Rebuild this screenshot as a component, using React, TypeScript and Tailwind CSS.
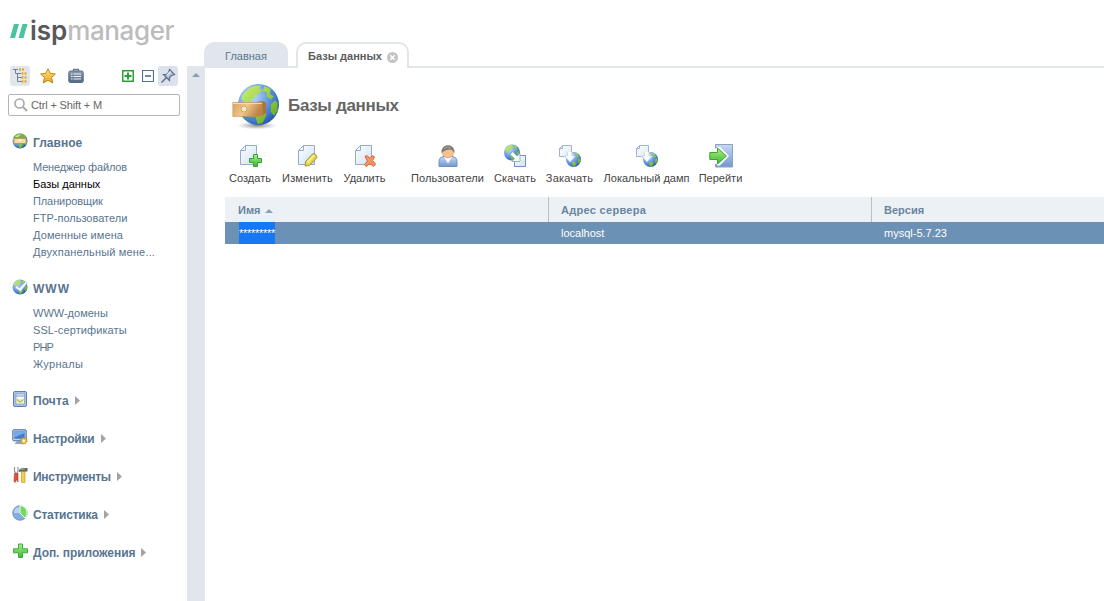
import React from "react";

const Defs = () => (
  <svg className="absolute size-0" aria-hidden="true">
    <defs>
      <radialGradient id="globe" cx="32%" cy="30%" r="78%">
        <stop offset="0" stopColor="#c4dff9" />
        <stop offset="0.5" stopColor="#6c9fe2" />
        <stop offset="0.8" stopColor="#3f74c8" />
        <stop offset="1" stopColor="#27509f" />
      </radialGradient>
      <linearGradient id="land" x1="0" y1="0" x2="1" y2="1">
        <stop offset="0" stopColor="#d2ee7c" />
        <stop offset="0.5" stopColor="#9ad03e" />
        <stop offset="1" stopColor="#55a01f" />
      </linearGradient>
      <linearGradient id="green" x1="0" y1="0" x2="0" y2="1">
        <stop offset="0" stopColor="#a9f087" />
        <stop offset="1" stopColor="#3cb82e" />
      </linearGradient>
      <linearGradient id="page" x1="0" y1="0" x2="1" y2="1">
        <stop offset="0" stopColor="#ffffff" />
        <stop offset="1" stopColor="#cfe0f4" />
      </linearGradient>
      <linearGradient id="drawer" x1="0" y1="0" x2="1" y2="0.3">
        <stop offset="0" stopColor="#d8a25e" />
        <stop offset="0.5" stopColor="#efc68c" />
        <stop offset="1" stopColor="#bd8543" />
      </linearGradient>
      <linearGradient id="blue" x1="0" y1="0" x2="0" y2="1">
        <stop offset="0" stopColor="#c5daf3" />
        <stop offset="1" stopColor="#7397cf" />
      </linearGradient>
      <linearGradient id="gold" x1="0" y1="0" x2="0" y2="1">
        <stop offset="0" stopColor="#ffe98a" />
        <stop offset="1" stopColor="#e9a313" />
      </linearGradient>
      <linearGradient id="steel" x1="0" y1="0" x2="0" y2="1">
        <stop offset="0" stopColor="#8e9fb5" />
        <stop offset="1" stopColor="#53677f" />
      </linearGradient>
      <radialGradient id="shade">
        <stop offset="0" stopColor="#555" stopOpacity="0.7" />
        <stop offset="1" stopColor="#888" stopOpacity="0" />
      </radialGradient>
    </defs>
  </svg>
);

const GlobeShape = ({ x, y, r }: { x: number; y: number; r: number }) => (
  <g transform={`translate(${x} ${y}) scale(${r / 10})`}>
    <circle r="10" fill="url(#globe)" />
    <path
      d="M-8.500 -3C-7 -7 -3 -9.500 1 -9.300L.5 -7.500L2 -7L0 -5L-1.500 -5L-2 -3L-4 -2.500L-3.500 -1L-5 0L-7 -1.500ZM3 -9L6 -7.500L5.500 -5L7.500 -4L6 -2.500L4 -4L4 -6L2 -6.500ZM6 0L8 -2L9.300 -1V3L7.500 5.500L6 3.500ZM-2 3.500L1 3L4 4.500L3.500 6L2 9L-.5 9.500L-1 7.500Z"
      fill="url(#land)"
    />
  </g>
);

const PageShape = () => (
  <path d="M7.500 1.500H18.500V20.500H2.500V6.500ZM7.500 1.500V6.500H2.500" fill="url(#page)" stroke="#93acce" />
);

const Svg24 = ({ children }: { children: React.ReactNode }) => (
  <svg className="size-6 shrink-0" viewBox="0 0 24 24">{children}</svg>
);

const CreateIcon = () => (
  <Svg24>
    <PageShape />
    <path d="M15.500 10.500H19.500V14.500H23.500V18.500H19.500V22.500H15.500V18.500H11.500V14.500H15.500Z" fill="url(#green)" stroke="#32a435" />
  </Svg24>
);
const EditIcon = () => (
  <Svg24>
    <PageShape />
    <path d="M9.500 17.500L17 9.500Q20.500 10 21 13.500L13.500 21.500L9 22Z" fill="#e3d548" stroke="#9d9437" />
    <path d="M11.500 18.500L18.500 11" stroke="#fbf4a0" strokeWidth="1.500" />
  </Svg24>
);
const DeleteIcon = () => (
  <Svg24>
    <PageShape />
    <path d="M12 12.500L14 11.500L16.500 14L20 11.500L21.500 13L19.500 16.500L22.500 20L20.500 22.500L17 19.500L13 22.500L11.500 20.500L14.500 17Z" fill="#f59561" stroke="#dc6139" strokeLinejoin="round" />
  </Svg24>
);
const UserIcon = () => (
  <Svg24>
    <path d="M3 22.500V17.500Q3 13 8 12.500H16Q21 13 21 17.500V22.500Z" fill="url(#blue)" stroke="#6f8fc2" />
    <path d="M8 13L12 19.500L16 13Z" fill="#fff" />
    <circle cx="12" cy="8.500" r="5.500" fill="#f3c28d" stroke="#b98d61" strokeWidth=".5" />
    <path d="M5.500 9C4.500 -1.500 19.500 -1.500 18.500 9L16 6Q12 4.500 8.500 7Z" fill="#7f7b76" />
    <path d="M8 4.500Q11 1.500 15 4" fill="none" stroke="#aaa49c" />
  </Svg24>
);
const DownloadIcon = () => (
  <Svg24>
    <GlobeShape x={9} y={8.5} r={8} />
    <rect x="11.500" y="11.500" width="11" height="11" fill="url(#page)" stroke="#7394bf" />
    <path d="M9.500 7.500L14 12L17 9.500V17.500H9L11.500 14.500L7 10.500Z" fill="#f5faff" stroke="#86a5cc" strokeWidth=".8" />
  </Svg24>
);
const UploadIcon = () => (
  <Svg24>
    <GlobeShape x={15.5} y={15.5} r={7.5} />
    <path d="M4.500 1.500H13.500V9.500H17L12 17L6.500 12.500H1.500V4.500ZM4.500 1.500V4.500H1.500" fill="url(#page)" stroke="#9fb5d2" />
    <path d="M9.500 8V12L6.500 12L12 18L17.500 12H14V8" fill="#fafdff" stroke="#bccbdd" strokeWidth=".7" />
  </Svg24>
);
const GoIcon = () => (
  <Svg24>
    <path d="M6.500 .5H23.500V23H6.500V20L10 22L19.500 12L10 2L6.500 4Z" fill="url(#blue)" stroke="#8ba2c6" />
    <path d="M8 2.500H11L20 12L11 21.500H8" fill="#fff" />
    <path d="M.8 8.500H8.500V4L17.500 12L8.500 20V15.500H.8Z" fill="url(#green)" stroke="#459f38" />
  </Svg24>
);

const Svg16 = ({ children }: { children: React.ReactNode }) => (
  <svg className="size-4 shrink-0" viewBox="0 0 16 16">{children}</svg>
);

const MainIcon = () => (
  <Svg16>
    <GlobeShape x={8} y={8} r={7.5} />
    <path d="M1 5Q3 .5 8 .5T15 5Z" fill="#7fae45" />
    <path d="M3 4Q5 1 9 1.500L6 4Z" fill="#d2e6a2" />
    <rect x="2" y="5.500" width="12" height="5" rx=".5" fill="#f3dba8" stroke="#b58a45" strokeWidth=".7" />
    <rect x="6.500" y="6.500" width="3" height="1.500" fill="#fffbea" />
  </Svg16>
);
const WebIcon = () => (
  <Svg16>
    <GlobeShape x={8} y={8} r={7.5} />
    <path d="M4 6L7.500 9L13.500 2.500L15 4.500L8.500 12.500L3.500 9Z" fill="#f7fbff" stroke="#8fb2da" strokeWidth=".6" />
  </Svg16>
);
const MailIcon = () => (
  <Svg16>
    <rect x="1.500" y=".5" width="13" height="15" rx="1.500" fill="#a8c2e8" stroke="#627fae" />
    <rect x="4" y="3" width="8.500" height="10" fill="#f4f8fd" stroke="#7e99c2" strokeWidth=".7" />
    <path d="M3.500 5H12.500" stroke="#7d98bf" />
    <path d="M5 8H11.500V12H5Z" fill="#eef29b" />
    <path d="M5 8.500L8.200 11L11.500 8.500" fill="none" stroke="#93a94a" />
  </Svg16>
);
const SettingsIcon = () => (
  <Svg16>
    <rect x=".8" y=".8" width="13.400" height="11" rx="1" fill="#c3d3e9" stroke="#4a6898" />
    <rect x="2.300" y="2.300" width="10.400" height="7.500" fill="#3f7ccd" />
    <path d="M2.300 2.300H12.700V4L2.300 8.500Z" fill="#79aae8" />
    <path d="M5 12H9L11 15H2.500Z" fill="#8ba4c3" />
    <circle cx="11.800" cy="11.800" r="2.800" fill="#f6d35b" stroke="#c8962a" strokeWidth="1.800" strokeDasharray="1.400 .8" />
    <circle cx="11.800" cy="11.800" r="1.100" fill="#fff" />
  </Svg16>
);
const ToolsIcon = () => (
  <Svg16>
    <path d="M2.500 0V4L4 7M6 0V4L4.500 7" stroke="#8c98a5" strokeWidth="1.200" fill="none" />
    <path d="M2.500 6.500H6V15L4.500 12.500L3 15.500L2 14Z" fill="#dd5637" stroke="#aa3421" strokeWidth=".6" />
    <rect x="9.500" y="4" width="3.500" height="11.700" rx=".8" fill="#efd346" stroke="#b39118" strokeWidth=".6" />
    <path d="M7 3Q8.500 .5 13 1H15.500V4.500H9L7 5Z" fill="#59695f" />
    <path d="M8.500 2.200H13" stroke="#a5b2a8" />
  </Svg16>
);
const StatsIcon = () => (
  <Svg16>
    <circle cx="8" cy="8" r="7.300" fill="#82addf" stroke="#5884bd" strokeWidth=".7" />
    <path d="M2 8Q2 2 7.500 2V8Z" fill="#b8d2f0" />
    <path d="M8 8V.7A7.300 7.300 0 0 1 13 13.200Z" fill="#73d961" stroke="#f1fff0" strokeWidth="1" />
  </Svg16>
);
const PlusIcon = () => (
  <Svg16>
    <path d="M6.500 1H10.500V5.800H15.500V9.800H10.500V14.500H6.500V9.800H1.500V5.800H6.500Z" fill="url(#green)" stroke="#3daa45" />
  </Svg16>
);

const TreeIcon = () => (
  <Svg16>
    <path d="M1 1.500H6M3.500 2V5.500H9M5.500 6V13.500H10M5.500 9.500H10" fill="none" stroke="#6f8196" />
    <path d="M7 1.500H9M10 1.500H12M9.500 5.500H11.500M12.500 5.500H14.500M9.500 9.500H11.500M12.500 9.500H14.500M9.500 13.500H11.500M12.500 13.500H14.500" stroke="#dfaa38" strokeWidth="2.400" />
  </Svg16>
);
const StarIcon = () => (
  <Svg16>
    <path d="M8 .7L10.200 5.300L15.400 6L11.500 9.500L12.800 15L8 12.300L3.200 15L4.500 9.500L.6 6L5.800 5.300Z" fill="url(#gold)" stroke="#c5851a" strokeLinejoin="round" />
  </Svg16>
);
const CaseIcon = () => (
  <Svg16>
    <path d="M5.500 3V1.500H10.500V3" fill="none" stroke="#6c7d93" strokeWidth="1.300" />
    <rect x=".8" y="3" width="14.400" height="11.500" rx="1.500" fill="url(#steel)" stroke="#586b83" />
    <path d="M3 6H4.500M5.500 6H13M3 8.500H4.500M5.500 8.500H13M3 11H4.500M5.500 11H13" stroke="#eef2f6" strokeWidth="1.200" />
  </Svg16>
);
const PinIcon = () => (
  <Svg16>
    <path d="M9.500 1.500L14.500 6.500L11.500 7.500L9.500 9.500L9.500 12.500L3.500 6.500L6.500 6.500L8.500 4.500Z" fill="#b9c7d7" stroke="#58708b" strokeWidth="1.200" />
    <path d="M6.500 9.500L1.500 14.500" stroke="#58708b" strokeWidth="1.500" />
    <path d="M7 7L10.500 3.500" stroke="#eef3f8" strokeWidth="1.200" />
  </Svg16>
);

const Triangle = () => (
  <svg className="h-[9px] w-[5px] shrink-0" viewBox="0 0 5 9">
    <path d="M0 0L5 4.500L0 9Z" fill="#a3a3a3" />
  </svg>
);

const Logo = () => (
  <div className="flex h-[30px] items-center">
    <svg className="h-[14px] w-[18px] shrink-0" viewBox="0 0 18 14">
      <path d="M4 0H9L5 14H0Z" fill="#4ac49f" />
      <path d="M12.500 0H17.500L13.500 14H8.500Z" fill="#4ac49f" />
    </svg>
    <span className="ml-[2px] font-['Inter'] text-[26px] leading-[30px] font-semibold text-[#58585a]">isp</span>
    <span className="font-['Inter'] text-[26px] leading-[30px] font-medium tracking-[-0.4px] text-[#bcbcbc]">manager</span>
  </div>
);

type Item = { label: string; tracking: string; active?: boolean };
type Section = { title: string; tracking: string; icon: React.ReactNode; items?: Item[]; height: string };

const sections: Section[] = [
  {
    title: "Главное", tracking: "tracking-normal", icon: <MainIcon />, height: "h-[146px]",
    items: [
      { label: "Менеджер файлов", tracking: "tracking-[-0.15px]" },
      { label: "Базы данных", tracking: "tracking-normal", active: true },
      { label: "Планировщик", tracking: "tracking-[-0.1px]" },
      { label: "FTP-пользователи", tracking: "tracking-normal" },
      { label: "Доменные имена", tracking: "tracking-[0.1px]" },
      { label: "Двухпанельный мене...", tracking: "tracking-[0.18px]" },
    ],
  },
  {
    title: "WWW", tracking: "tracking-[1px]", icon: <WebIcon />, height: "h-[112px]",
    items: [
      { label: "WWW-домены", tracking: "tracking-normal" },
      { label: "SSL-сертификаты", tracking: "tracking-[0.1px]" },
      { label: "PHP", tracking: "tracking-[-0.9px]" },
      { label: "Журналы", tracking: "tracking-[0.3px]" },
    ],
  },
  { title: "Почта", tracking: "tracking-[0.1px]", icon: <MailIcon />, height: "h-[38px]" },
  { title: "Настройки", tracking: "tracking-[-0.2px]", icon: <SettingsIcon />, height: "h-[38px]" },
  { title: "Инструменты", tracking: "tracking-[-0.3px]", icon: <ToolsIcon />, height: "h-[38px]" },
  { title: "Статистика", tracking: "tracking-[-0.25px]", icon: <StatsIcon />, height: "h-[38px]" },
  { title: "Доп. приложения", tracking: "tracking-[-0.05px]", icon: <PlusIcon />, height: "h-[38px]" },
];

const Sidebar = () => (
  <aside className="flex w-[187px] shrink-0 flex-col">
    <div className="h-[66px] pt-[16px] pl-[10px]"><Logo /></div>
    <div className="flex h-5 items-center pl-[10px]">
      <span className="flex size-5 items-center justify-center rounded-[3px] bg-[#e1e6ec]"><TreeIcon /></span>
      <span className="ml-[10px] flex"><StarIcon /></span>
      <span className="ml-[12px] flex"><CaseIcon /></span>
      <svg className="ml-[38px] size-3 shrink-0" viewBox="0 0 12 12">
        <path d="M.75 .75H11.250V11.250H.75Z" fill="#fff" stroke="#2aa437" strokeWidth="1.500" />
        <path d="M6 2.500V9.500M2.500 6H9.500" stroke="#2aa437" strokeWidth="2" />
      </svg>
      <svg className="ml-2 size-3 shrink-0" viewBox="0 0 12 12">
        <path d="M.5 .5H11.500V11.500H.5Z" fill="#fff" stroke="#54718f" strokeWidth="1.200" />
        <path d="M3 6H9" stroke="#44617f" strokeWidth="1.500" />
      </svg>
      <span className="ml-1 flex size-5 items-center justify-center rounded-[3px] bg-[#dbe2eb]"><PinIcon /></span>
    </div>
    <div className="mt-2 ml-2 flex h-[22px] w-[172px] items-center rounded-[2px] border border-[#b5b5b5] pl-[5px]">
      <svg className="size-[14px] shrink-0" viewBox="0 0 14 14">
        <circle cx="5.500" cy="5.500" r="4.500" fill="none" stroke="#a8a8a8" strokeWidth="1.600" />
        <path d="M9 9L13 13" stroke="#a8a8a8" strokeWidth="2" />
      </svg>
      <span className="ml-[3px] text-[11px] tracking-[-0.15px] text-[#666]">Ctrl + Shift + M</span>
    </div>
    <nav className="mt-[17px] flex flex-col">
      {sections.map((s) => (
        <section key={s.title} className={s.height}>
          <div className="flex h-[18px] items-start pl-[13px]">
            <span className="-ml-px flex">{s.icon}</span>
            <h2 className={`mt-[2px] ml-[5px] text-[12px] leading-[16px] font-bold whitespace-nowrap text-[#587590] ${s.tracking}`}>{s.title}</h2>
            {!s.items && <span className="mt-[5px] ml-[6px] flex"><Triangle /></span>}
          </div>
          {s.items && (
            <ul className="mt-2 ml-[33px]">
              {s.items.map((i) => (
                <li key={i.label} className={`h-[17px] text-[11px] leading-[17px] whitespace-nowrap ${i.active ? "text-black" : "text-[#587590]"}`}>
                  <span className={i.tracking}>{i.label}</span>
                </li>
              ))}
            </ul>
          )}
        </section>
      ))}
    </nav>
  </aside>
);

const tools = [
  { label: "Создать", width: "w-[42px]", margin: "ml-6", tracking: "tracking-normal", icon: <CreateIcon /> },
  { label: "Изменить", width: "w-[51px]", margin: "ml-[11px]", tracking: "tracking-[0.15px]", icon: <EditIcon /> },
  { label: "Удалить", width: "w-[41px]", margin: "ml-[11px]", tracking: "tracking-normal", icon: <DeleteIcon /> },
  { label: "Пользователи", width: "w-[73px]", margin: "ml-[26px]", tracking: "tracking-[0.1px]", icon: <UserIcon /> },
  { label: "Скачать", width: "w-[42px]", margin: "ml-[10px]", tracking: "tracking-[0.1px]", icon: <DownloadIcon /> },
  { label: "Закачать", width: "w-[47px]", margin: "ml-[10px]", tracking: "tracking-[0.15px]", icon: <UploadIcon /> },
  { label: "Локальный дамп", width: "w-[85px]", margin: "ml-[11px]", tracking: "tracking-normal", icon: <UploadIcon /> },
  { label: "Перейти", width: "w-[43px]", margin: "ml-[10px]", tracking: "tracking-normal", icon: <GoIcon /> },
];

const DatabaseIcon = () => (
  <svg className="h-12 w-[50px] shrink-0" viewBox="0 0 50 48">
    <ellipse cx="25" cy="43.500" rx="20" ry="4" fill="url(#shade)" />
    <GlobeShape x={26.5} y={22.5} r={20.5} />
    <path d="M24 20.500L30 19L34 20.500V31L29 34.500Z" fill="#a97539" />
    <path d="M.8 20.500H30V34.500H.8Z" fill="url(#drawer)" stroke="#c4945a" strokeWidth=".6" />
    <path d="M1 21.500H30" stroke="#f8dbad" />
    <circle cx="12" cy="27" r="3" fill="#f9e8bf" stroke="#c9985a" strokeWidth=".8" />
  </svg>
);

const HEAD = "flex h-[25px] items-center bg-[#ecf1f5] pt-[2px] font-bold text-[#6985a0]";
const CELL = "flex h-[22px] items-center bg-[#6b91b5] text-white";

const Main = () => (
  <main className="flex min-w-0 flex-1 flex-col">
    <div className="flex h-[68px] items-end">
      <div className="z-10 mb-[2px] -ml-px flex h-6 w-[84px] items-center justify-center rounded-t-[10px] bg-[#e1e6ec] pt-[4px] text-[11px] text-[#587590]">Главная</div>
      <div className="-ml-[83px] h-[2px] w-[91px] bg-[#e1e6ec]" />
      <div className="flex h-[26px] w-[113px] items-center rounded-t-[10px] border-2 border-b-0 border-[#e1e6ec] pl-[10px] text-[11px] font-bold text-[#5c5c5c]">
        <span className="w-[73px] whitespace-nowrap">Базы данных</span>
        <svg className="mt-[2px] ml-[6px] size-[11px] shrink-0" viewBox="0 0 11 11">
          <circle cx="5.500" cy="5.500" r="5.500" fill="#c3c3c3" />
          <path d="M3.300 3.300L7.700 7.700M7.700 3.300L3.300 7.700" stroke="#fff" strokeWidth="1.400" />
        </svg>
      </div>
      <div className="h-[2px] flex-1 bg-[#e1e6ec]" />
    </div>
    <header className="mt-[14px] ml-[27px] flex h-12 items-center">
      <DatabaseIcon />
      <h1 className="ml-[6px] text-[17px] font-bold whitespace-nowrap tracking-[-0.33px] text-[#666]">Базы данных</h1>
    </header>
    <div className="mt-[14px] flex h-[53px]">
      {tools.map((t) => (
        <div key={t.label} className={`flex shrink-0 flex-col items-center ${t.width} ${t.margin}`}>
          {t.icon}
          <span className={`mt-[2px] text-[11px] leading-4 whitespace-nowrap text-[#444] ${t.tracking}`}>{t.label}</span>
        </div>
      ))}
    </div>
    <div className="ml-5 grid grid-cols-[324px_323px_1fr] text-[11px]">
      <div className={`${HEAD} border-r border-[#b9c0c7] pl-[13px]`}>
        <span>Имя</span>
        <svg className="mt-px ml-[5px] h-1 w-2" viewBox="0 0 8 4"><path d="M4 0L8 4H0Z" fill="#8ba1b7" /></svg>
      </div>
      <div className={`${HEAD} border-r border-[#b9c0c7] pl-[12px]`}><span className="tracking-[0.3px]">Адрес сервера</span></div>
      <div className={`${HEAD} pl-[12px]`}>Версия</div>
      <div className={`${CELL} pl-[14px]`}><span className="flex h-full w-[36px] items-center bg-[#1877f2] tracking-[-0.28px]">*********</span></div>
      <div className={`${CELL} pl-[12px]`}>localhost</div>
      <div className={`${CELL} pl-[12px]`}>mysql-5.7.23</div>
    </div>
  </main>
);

export default function App() {
  return (
    <div className="flex h-[601px] w-[1104px] overflow-hidden bg-white font-['Liberation_Sans',sans-serif]">
      <Defs />
      <Sidebar />
      <div className="mt-[66px] flex w-[18px] shrink-0 justify-center bg-[#e1e6ec] pt-[7px]">
        <svg className="h-1 w-2" viewBox="0 0 8 4"><path d="M4 0L8 4H0Z" fill="#8b9cad" /></svg>
      </div>
      <Main />
    </div>
  );
}
